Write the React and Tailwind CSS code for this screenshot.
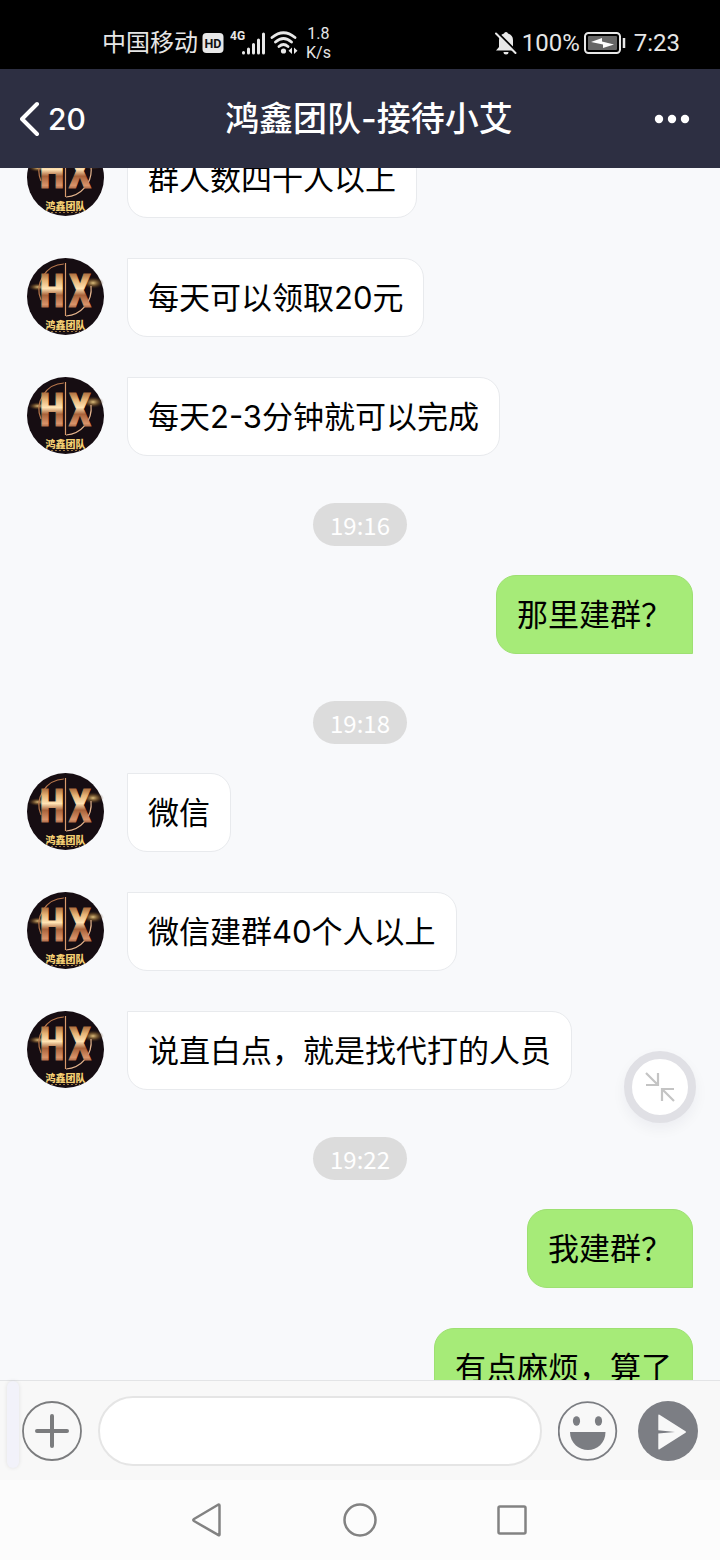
import React from "react";

const items = [
  { kind: "in", text: "群人数四十人以上" },
  { kind: "in", text: "每天可以领取20元" },
  { kind: "in", text: "每天2-3分钟就可以完成" },
  { kind: "time", text: "19:16" },
  { kind: "out", text: "那里建群？" },
  { kind: "time", text: "19:18" },
  { kind: "in", text: "微信" },
  { kind: "in", text: "微信建群40个人以上" },
  { kind: "in", text: "说直白点，就是找代打的人员" },
  { kind: "time", text: "19:22" },
  { kind: "out", text: "我建群？" },
  { kind: "out", text: "有点麻烦，算了" },
];

function Avatar() {
  return (
    <svg viewBox="0 0 77 77" className="size-[77px] shrink-0" aria-hidden="true">
      <defs>
        <linearGradient id="gold" gradientUnits="userSpaceOnUse" x1="0" y1="15" x2="0" y2="52">
          <stop offset="0" stopColor="#a8683a" />
          <stop offset="0.2" stopColor="#e5b274" />
          <stop offset="0.42" stopColor="#ffe3b4" />
          <stop offset="0.6" stopColor="#a8623a" />
          <stop offset="0.85" stopColor="#d9936a" />
          <stop offset="1" stopColor="#8a4c30" />
        </linearGradient>
        <radialGradient id="flare">
          <stop offset="0" stopColor="#f8d68c" stopOpacity="0.9" />
          <stop offset="0.5" stopColor="#a5793a" stopOpacity="0.5" />
          <stop offset="1" stopColor="#3a2412" stopOpacity="0" />
        </radialGradient>
      </defs>
      <circle cx="38.500" cy="38.500" r="38.500" fill="#160d12" />
      <ellipse cx="11" cy="29" rx="10" ry="4" fill="url(#flare)" />
      <ellipse cx="66" cy="25" rx="11" ry="6" fill="url(#flare)" />
      <path d="M37 6A26 26 0 0 0 14 42" fill="none" stroke="#b9774c" strokeWidth="1.200" />
      <path d="M39 58A27 27 0 0 0 64 28" fill="none" stroke="#e5b48d" strokeWidth="1.200" />
      <g fill="url(#gold)" stroke="url(#gold)" strokeWidth="1" fontSize="46" fontWeight="700" fontFamily="'Liberation Sans Narrow', 'Open Sans Condensed', 'DejaVu Sans Condensed', sans-serif" textAnchor="middle">
        <text x="25" y="49">H</text>
        <text x="53" y="49">X</text>
      </g>
      <path d="M38 6V58" stroke="#160d12" strokeWidth="2.500" />
      <path d="M38.500 5V58" stroke="#d89a6c" strokeWidth="1.200" />
      <text x="38.500" y="71" textAnchor="middle" fontSize="10" fontWeight="900" fill="#f3cf72" fontFamily="'Noto Sans CJK SC', sans-serif">鸿鑫团队</text>
      <path d="M24 73.500H53" stroke="#9a7440" strokeWidth="1" strokeDasharray="2 2" />
    </svg>
  );
}

function Item({ kind, text }) {
  if (kind === "time") {
    return (
      <li className="-mb-[11px] mt-[7px] flex justify-center">
        <time className="flex h-[43px] items-center rounded-full bg-[#dcdcdc] px-[17px] font-['Noto_Sans_CJK_SC',sans-serif] text-2xl leading-10 text-white">{text}</time>
      </li>
    );
  }
  if (kind === "out") {
    return (
      <li className="flex justify-end">
        <p className="flex h-[79px] items-center rounded-[20px] rounded-br-none border border-[#9ee072] bg-[#a6eb78] px-5 text-[31px] leading-10">{text}</p>
      </li>
    );
  }
  return (
    <li className="flex items-start gap-[23px]">
      <Avatar />
      <p className="flex h-[79px] items-center rounded-[20px] rounded-tl-none border border-[#e8eaed] bg-white px-5 text-[31px] leading-10">{text}</p>
    </li>
  );
}

function StatusBar() {
  return (
    <div className="flex h-[69px] shrink-0 items-center justify-between bg-black pl-[102px] pr-10 pt-4 text-[#e6e6e6]">
      <div className="flex items-center">
        <span className="text-2xl leading-8">中国移动</span>
        <svg viewBox="0 0 22 22" className="ml-1 size-[22px]" aria-label="HD">
          <rect x="0.500" y="1" width="21" height="20" rx="4" fill="#e8e8e8" />
          <text x="11" y="15.500" textAnchor="middle" fontSize="12.500" fontWeight="700" fill="#111" fontFamily="Roboto, sans-serif">HD</text>
        </svg>
        <svg viewBox="0 0 38 28" className="ml-1.5 h-7 w-[38px]" aria-label="4G">
          <text x="0" y="11" fontSize="12" fontWeight="700" fill="#e8e8e8" fontFamily="'Liberation Sans Narrow', Roboto, sans-serif">4G</text>
          <g stroke="#e8e8e8" strokeWidth="3" strokeLinecap="round">
            <path d="M13.500 23.500V24M18.500 20V24M23.500 15.500V24M28.500 11V24M33.500 5V24" />
          </g>
        </svg>
        <svg viewBox="0 0 28 26" className="ml-0.5 h-[26px] w-7" aria-label="Wi-Fi">
          <g fill="none" stroke="#e8e8e8" strokeWidth="2.800" strokeLinecap="round">
            <path d="M2 7.500Q13.500-2 25 7.500M5.500 12Q13.500 5 21.500 12M9 16.500Q13.500 12.500 18 16.500" />
          </g>
          <circle cx="13.500" cy="21" r="2.600" fill="#e8e8e8" />
          <path d="M22 17.500V24L18.500 20.800ZM24 17.500V24L27.500 20.800Z" fill="#e8e8e8" />
        </svg>
        <span className="ml-2 flex flex-col items-center font-[Roboto] text-base leading-[19px]">
          <span>1.8</span>
          <span>K/s</span>
        </span>
      </div>
      <div className="flex items-center font-[Roboto] text-2xl">
        <svg viewBox="0 0 24 24" className="mr-1 size-6" aria-hidden="true">
          <path d="M12 1a2 2 0 0 1 2 1.600A7 7 0 0 1 19 9.500V16l3 3.500H2L5 16V9.500A7 7 0 0 1 10 2.600 2 2 0 0 1 12 1ZM9.500 21h5a2.500 2.500 0 0 1-5 0Z" fill="#e8e8e8" />
          <path d="M3.500 1.500L23 21" stroke="#000" strokeWidth="2" />
          <path d="M2 2.500L21.500 22" stroke="#e8e8e8" strokeWidth="2" strokeLinecap="round" />
        </svg>
        <span>100%</span>
        <svg viewBox="0 0 42 22" className="ml-1 h-[22px] w-[42px]" aria-hidden="true">
          <rect x="1" y="1" width="35" height="20" rx="3.500" fill="none" stroke="#e8e8e8" strokeWidth="2" />
          <rect x="4" y="4" width="29" height="14" rx="1" fill="#666" />
          <path d="M7 10L18 6V9.500L30 12.500L19 16V12.500Z" fill="#fff" />
          <path d="M40 6V16" stroke="#e8e8e8" strokeWidth="2.500" />
        </svg>
        <time className="ml-2">7:23</time>
      </div>
    </div>
  );
}

export default function App() {
  return (
    <div className="flex h-screen flex-col overflow-hidden bg-[#f8f9fb] font-['Inter','Noto_Sans_CJK_SC',sans-serif] text-black">
      <StatusBar />
      <header className="grid h-[99px] shrink-0 grid-cols-[1fr_auto_1fr] items-center bg-[#2d2f42] px-5 font-medium text-white">
        <button type="button" aria-label="返回" className="flex items-center gap-2 justify-self-start text-3xl">
          <svg viewBox="0 0 20 36" className="h-9 w-5" fill="none" stroke="currentColor" strokeWidth="4" strokeLinecap="round" strokeLinejoin="round">
            <path d="M17 3L2 18L17 33" />
          </svg>
          20
        </button>
        <h1 className="-mr-[18px] text-[34px]">鸿鑫团队-接待小艾</h1>
        <button type="button" aria-label="更多" className="mr-2.5 justify-self-end">
          <svg viewBox="0 0 36 10" className="h-2.5 w-9" fill="currentColor">
            <circle cx="5" cy="5" r="4.200" />
            <circle cx="18" cy="5" r="4.200" />
            <circle cx="31" cy="5" r="4.200" />
          </svg>
        </button>
      </header>

      <main className="relative min-h-0 flex-1 overflow-hidden">
        <ul className="-mt-[29px] flex flex-col gap-10 px-[27px]">
          {items.map((item) => (
            <Item key={item.text} {...item} />
          ))}
        </ul>
        <button type="button" aria-label="缩小" className="absolute bottom-[257px] right-6 flex size-[72px] items-center justify-center rounded-full border-8 border-[#e0e0e5] bg-white shadow-[0_6px_14px_rgba(0,0,60,0.05)]">
          <svg viewBox="0 0 30 30" className="size-[30px]" fill="none" stroke="#c4c4c4" strokeWidth="2.200">
            <path d="M1 1L13 13M13 1V13H1M29 29L17 17M17 29V17H29" />
          </svg>
        </button>
      </main>

      <footer className="relative flex h-[100px] shrink-0 items-center border-t border-[#e3e4e6] bg-[#f8f8f8] px-[22px]">
        <span className="absolute left-[7px] top-0 h-[87px] w-3 rounded-full bg-[#f2f2fa] shadow-[0_0_4px_rgba(0,0,0,0.1)]" />
        <button type="button" aria-label="添加">
          <svg viewBox="0 0 60 60" className="size-[60px]" fill="none" stroke="#7b7c7e">
            <circle cx="30" cy="30" r="29" strokeWidth="1.800" />
            <path d="M15 30H45M30 15V45" strokeWidth="4" strokeLinecap="round" />
          </svg>
        </button>
        <input type="text" aria-label="消息" className="mx-4 h-[70px] min-w-0 flex-1 rounded-full border-2 border-[#e5e5e5] bg-white px-6 text-[31px] outline-none" />
        <button type="button" aria-label="表情">
          <svg viewBox="0 0 60 60" className="size-[60px]">
            <circle cx="29.500" cy="30" r="28.800" fill="none" stroke="#7b7d82" strokeWidth="1.800" />
            <ellipse cx="18.500" cy="20" rx="3.600" ry="4.800" fill="#7b7d82" />
            <ellipse cx="40.500" cy="20" rx="3.600" ry="4.800" fill="#7b7d82" />
            <path d="M12 31H47.500C47.500 42 39 49 30 49S12 42 12 31Z" fill="#7b7d82" />
          </svg>
        </button>
        <button type="button" aria-label="发送" className="ml-5">
          <svg viewBox="0 0 60 60" className="size-[60px]">
            <circle cx="30" cy="30" r="30" fill="#7c7e84" />
            <path d="M21.500 13.800L47.500 30.200Q48.800 31 47.500 31.800L21.500 48.200Q20.300 48.800 20.300 47.500V32.500L37 31L20.300 29.200V14.500Q20.300 13.200 21.500 13.800Z" fill="#f8f8f8" />
          </svg>
        </button>
      </footer>

      <nav className="flex h-20 shrink-0 items-center justify-center gap-[116px] bg-[#fcfcfc]">
        <button type="button" aria-label="后退">
          <svg viewBox="0 0 36 36" className="size-9" fill="none" stroke="#828282" strokeWidth="2.500" strokeLinejoin="round">
            <path d="M28.500 2.500Q29.500 2.500 29.500 3.500V32.500Q29.500 33.500 28.500 33.200L4 19Q2.500 18 4 17Z" />
          </svg>
        </button>
        <button type="button" aria-label="主页">
          <svg viewBox="0 0 36 36" className="size-9" fill="none" stroke="#828282" strokeWidth="2.500">
            <circle cx="18" cy="18" r="15.500" />
          </svg>
        </button>
        <button type="button" aria-label="最近">
          <svg viewBox="0 0 36 36" className="size-9" fill="none" stroke="#828282" strokeWidth="2.500">
            <rect x="4.500" y="4.500" width="27" height="27" rx="1.500" />
          </svg>
        </button>
      </nav>
    </div>
  );
}
